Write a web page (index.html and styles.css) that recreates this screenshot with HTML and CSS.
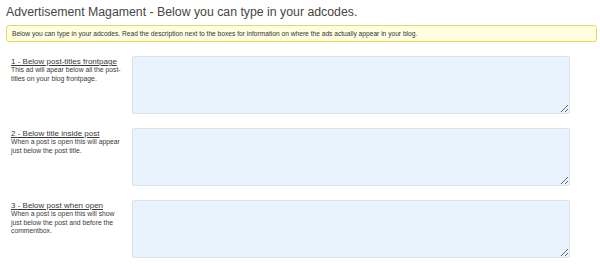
FILE: index.html
```html
<!DOCTYPE html>
<html lang="en">
<head>
  <meta charset="UTF-8">
  <title>Advertisement Magament</title>
  <link rel="stylesheet" href="styles.css">
</head>
<body>
  <div class="wrap">
    <h2>Advertisement Magament - Below you can type in your adcodes.</h2>

    <div class="notice">
      Below you can type in your adcodes. Read the description next to the boxes for information on where the ads actually appear in your blog.
    </div>

    <div class="adrow">
      <div class="desc">
        <u class="adname">1 - Below post-titles frontpage</u>
        This ad will apear below all the post-titles on your blog frontpage.
      </div>
      <textarea name="ad_frontpage"></textarea>
    </div>

    <div class="adrow">
      <div class="desc">
        <u class="adname">2 - Below title inside post</u>
        When a post is open this will appear just below the post title.
      </div>
      <textarea name="ad_title"></textarea>
    </div>

    <div class="adrow">
      <div class="desc">
        <u class="adname">3 - Below post when open</u>
        When a post is open this will show just below the post and before the commentbox.
      </div>
      <textarea name="ad_post"></textarea>
    </div>
  </div>
</body>
</html>
```

FILE: styles.css
```css
body {
  background-color: #fff;
  font-family: "Liberation Sans", Arial, sans-serif;
  color: #333;
  margin: 0;
}
.wrap {
  padding: 0 3px 0 6px;
}
h2 {
  font-size: 12.3px;
  font-weight: normal;
  color: #464646;
  margin: 0;
  padding: 5px 0 0 0;
  line-height: 14px;
}
.notice {
  margin-top: 6px;
  background-color: #ffffe0;
  border: 1px solid #e6db55;
  border-radius: 3px;
  font-size: 6.65px;
  line-height: 8px;
  padding: 4px 5px 3px 5px;
}
.adrow {
  display: flex;
  margin-top: 14px;
}
.adrow:first-of-type {
  margin-top: 12px;
}
.desc {
  width: 112px;
  padding: 1px 4px 0 5px;
  font-size: 6.8px;
  line-height: 8.5px;
  color: #3a3a3a;
}
.adname {
  display: block;
  font-size: 8px;
  line-height: 9px;
}
textarea {
  margin-left: 5px;
  width: 438px;
  height: 58px;
  box-sizing: border-box;
  background-color: #e8f3fd;
  border: 1px solid #dbe3ea;
  border-radius: 2px;
}
```
